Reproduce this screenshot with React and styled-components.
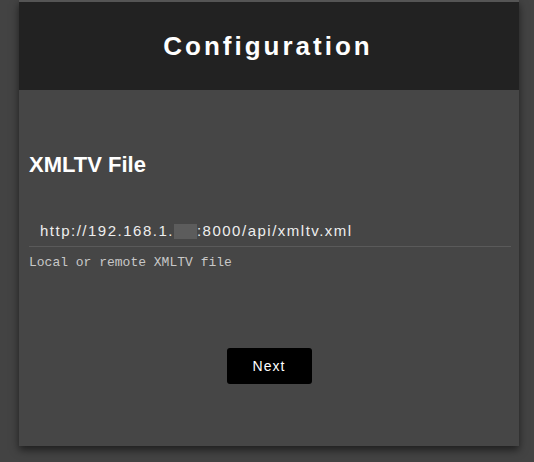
import React from "react";
import styled, { createGlobalStyle } from "styled-components";

const GlobalStyle = createGlobalStyle`
  html, body {
    margin: 0;
    padding: 0;
    background: #434343;
    font-family: "Liberation Sans", Arial, sans-serif;
  }
`;

const Page = styled.div`
  min-height: 462px;
  padding-left: 19px;
  box-sizing: border-box;
`;

const Card = styled.div`
  width: 500px;
  background: #464646;
  border-top: 2px solid #555;
  box-shadow: 0 4px 8px rgba(0, 0, 0, 0.55);
`;

const Header = styled.div`
  height: 88px;
  background: #222;
  display: flex;
  align-items: center;
  justify-content: center;

  h1 {
    margin: 0;
    padding-right: 2px;
    color: #fff;
    font-size: 26px;
    font-weight: 700;
    letter-spacing: 3px;
  }
`;

const Body = styled.div`
  padding: 62px 8px 62px 10px;
  display: flex;
  flex-direction: column;
`;

const Title = styled.h2`
  margin: 0;
  font-size: 22px;
  line-height: 26px;
  font-weight: 700;
  color: #fff;
`;

const Field = styled.div`
  margin-top: 38px;
  height: 30px;
  padding-left: 11px;
  display: flex;
  align-items: center;
  border-bottom: 1px solid #5a5a5a;
  font-size: 15px;
  line-height: 30px;
  letter-spacing: 1.5px;
  color: #eee;
  white-space: nowrap;
`;

const Redacted = styled.span`
  display: inline-block;
  width: 23px;
  height: 15px;
  background: #5c5c5c;
`;

const Hint = styled.div`
  margin-top: 8px;
  font-family: "Liberation Mono", "Courier New", monospace;
  font-size: 13px;
  line-height: 16px;
  color: #c8c8c8;
`;

const Button = styled.button`
  align-self: center;
  margin-top: 77px;
  margin-right: 2px;
  width: 85px;
  height: 36px;
  border: none;
  border-radius: 3px;
  background: #000;
  color: #fff;
  font-family: "Liberation Sans", Arial, sans-serif;
  font-size: 14px;
  letter-spacing: 1px;
  cursor: pointer;
`;

export default function App() {
  return (
    <Page>
      <GlobalStyle />
      <Card>
        <Header>
          <h1>Configuration</h1>
        </Header>
        <Body>
          <Title>XMLTV File</Title>
          <Field>
            http://192.168.1.<Redacted />:8000/api/xmltv.xml
          </Field>
          <Hint>Local or remote XMLTV file</Hint>
          <Button>Next</Button>
        </Body>
      </Card>
    </Page>
  );
}
